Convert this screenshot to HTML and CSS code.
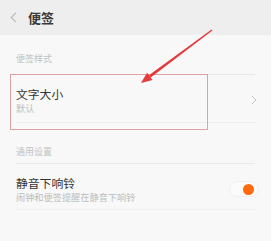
FILE: index.html
```html
<!DOCTYPE html>
<html lang="zh">
<head>
<meta charset="utf-8">
<title>便签</title>
<link rel="stylesheet" href="styles.css">
</head>
<body>
<div class="page">
  <header class="topbar">
    <svg class="back" width="7" height="11" viewBox="0 0 7 11"><path d="M6 0.8 L1.2 5.5 L6 10.2" fill="none" stroke="#b8b8b8" stroke-width="1.1"/></svg>
    <span class="title">便签</span>
  </header>
  <main class="content">
    <div class="section-label first">便签样式</div>
    <div class="row row-font">
      <div class="texts">
        <div class="row-title">文字大小</div>
        <div class="row-sub">默认</div>
      </div>
      <svg class="chev" width="6" height="10" viewBox="0 0 6 10"><path d="M1 1 L5 5 L1 9" fill="none" stroke="#c4c4c4" stroke-width="1"/></svg>
    </div>
    <div class="section-label second">通用设置</div>
    <div class="row row-silent">
      <div class="texts">
        <div class="row-title">静音下响铃</div>
        <div class="row-sub">闹钟和便签提醒在静音下响铃</div>
      </div>
      <div class="toggle"><span class="knob"></span></div>
    </div>
  </main>
  <div class="highlight"></div>
  <svg class="arrow" width="271" height="241" viewBox="0 0 271 241">
    <polygon points="212.4,30.4 211.6,29.6 148.9,75.2 150.7,77.6" fill="#e5393b"/>
    <polygon points="141,83 147.1,72.8 152.5,80" fill="#e5393b"/>
  </svg>
</div>
</body>
</html>
```
FILE: styles.css
```css
* { box-sizing: border-box; }
html, body { margin: 0; padding: 0; }
body {
  width: 271px;
  height: 241px;
  overflow: hidden;
  background: #f8f8f8;
  font-family: "Noto Sans CJK SC", "Noto Sans", sans-serif;
}
.page { position: relative; width: 271px; height: 241px; }
.topbar {
  height: 35px;
  background: #eeeeee;
  display: flex;
  align-items: center;
  padding-left: 10px;
}
.back { display: block; }
.title {
  margin-left: 11px;
  font-size: 13px;
  font-weight: 700;
  color: #3a3a3a;
  line-height: 19px;
}
.content { background: #f8f8f8; }
.section-label {
  font-size: 9px;
  line-height: 13px;
  color: #c2c2c2;
  padding-left: 16px;
}
.section-label.first { padding-top: 16.5px; padding-bottom: 9.5px; }
.section-label.second { padding-top: 21.5px; padding-bottom: 5.5px; }
.row {
  margin: 0 16px;
  display: flex;
  align-items: center;
  border-top: 1px solid #e9e9e9;
  border-bottom: 1px solid #ededed;
}
.row-font { height: 49px; padding-top: 3px; }
.row-silent { height: 47px; padding-top: 5px; border-bottom-color: #f0f0f0; }
.texts { flex: 1; }
.row-title {
  font-size: 11.8px;
  line-height: 17px;
  color: #333333;
}
.row-sub {
  font-size: 9.2px;
  line-height: 13.5px;
  color: #bcbcbc;
}
.chev { margin-right: -2px; }
.toggle {
  width: 30px;
  height: 16px;
  border-radius: 8px;
  background: #fbfbfb;
  border: 1px solid #f0f0f0;
  position: relative;
  margin-right: -4px;
}
.knob {
  position: absolute;
  right: 4px;
  top: 1.5px;
  width: 11px;
  height: 11px;
  border-radius: 50%;
  background: #ff6a0d;
}
.highlight {
  position: absolute;
  left: 10px;
  top: 74px;
  width: 198px;
  height: 56px;
  border: 1px solid #dba3a3;
  pointer-events: none;
}
.arrow { position: absolute; left: 0; top: 0; pointer-events: none; }
```
